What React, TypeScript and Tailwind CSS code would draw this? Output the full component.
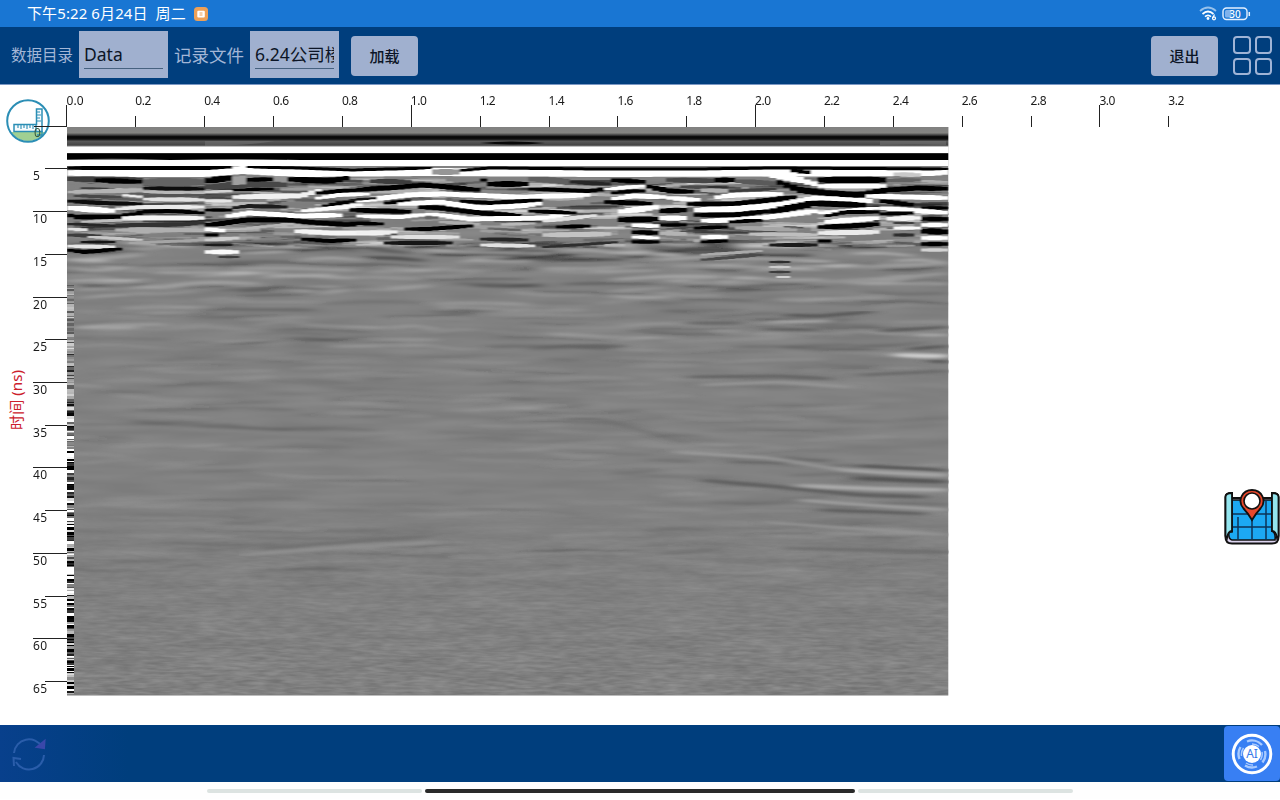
import type { ReactNode } from "react";

const FONT = "font-['Noto_Sans','Noto_Sans_CJK_SC',sans-serif]";

const LEFT = 67;
const RIGHT = 948.5;
const TRACE = (RIGHT - LEFT) / 128;

/** Horizon: grey level (0-255), thickness, then x,y points in page pixels. */
type Horizon = [number, number, ...number[]];

const HORIZONS: Horizon[] = [
  // first arrivals
  [255, 8, 67, 173, 205, 173, 240, 170, 300, 173, 430, 172, 600, 173, 948, 172],
  [0, 4, 67, 168, 205, 168, 231, 167],
  [0, 3, 245, 167, 300, 168, 350, 170, 432, 168],
  [0, 3, 455, 171, 490, 168, 600, 169, 700, 169, 770, 168, 948, 169],
  [150, 7, 432, 172, 458, 172],
  // 67 - 143
  [60, 6, 67, 179, 143, 180],
  [0, 5, 94, 180, 143, 182],
  [130, 4, 67, 186, 143, 186],
  [60, 3, 80, 188, 120, 190],
  [180, 4, 67, 192, 143, 190],
  [235, 3, 122, 195, 143, 197],
  [70, 3, 75, 196, 120, 197],
  [10, 4, 67, 201, 100, 203, 143, 204],
  [255, 6, 67, 208, 118, 211],
  [0, 5, 67, 214, 74, 217, 118, 217, 143, 213],
  [190, 3, 80, 222, 143, 219],
  [40, 3, 67, 224, 120, 226],
  [225, 4, 67, 229, 90, 230],
  [60, 4, 67, 235, 100, 236],
  [200, 3, 90, 237, 143, 240],
  [20, 3, 83, 242, 112, 242],
  [230, 4, 67, 246, 112, 247],
  [0, 4, 67, 250, 85, 252, 120, 249],
  // 143 - 205
  [100, 8, 143, 182, 205, 182],
  [15, 4, 143, 188, 205, 189],
  [185, 3, 143, 192, 205, 193],
  [85, 3, 143, 196, 205, 195],
  [225, 4, 143, 199, 205, 200],
  [75, 2, 143, 204, 205, 203],
  [235, 4, 118, 209, 143, 207, 205, 207],
  [0, 4, 135, 212, 170, 211, 205, 213],
  [245, 5, 125, 218, 205, 218],
  [50, 4, 115, 225, 170, 225, 205, 223],
  [175, 4, 118, 230, 205, 230],
  [165, 3, 130, 243, 205, 240],
  // 205 - 355
  [0, 7, 205, 181, 231, 178],
  [70, 6, 205, 187, 250, 184, 290, 185],
  [160, 12, 232, 181, 246, 180],
  [0, 5, 246, 180, 273, 179],
  [150, 7, 273, 178, 287, 180],
  [0, 6, 284, 179, 330, 181, 352, 177],
  [0, 3, 235, 190, 275, 189],
  [210, 3, 205, 192, 230, 191],
  [80, 3, 205, 196, 232, 195],
  [240, 5, 232, 197, 300, 196, 325, 189],
  [230, 4, 205, 201, 230, 201],
  [30, 4, 232, 208, 250, 206, 285, 207],
  [0, 4, 205, 210, 230, 210],
  [255, 5, 222, 217, 250, 213, 300, 216, 345, 215],
  [0, 5, 205, 225, 218, 224, 245, 220, 285, 220, 320, 223, 355, 225],
  [180, 3, 240, 229, 290, 224, 310, 228],
  [255, 5, 205, 229, 228, 231],
  [0, 4, 205, 235, 216, 235],
  [205, 4, 205, 240, 240, 238],
  [30, 3, 205, 245, 232, 245],
  [250, 5, 205, 252, 238, 252],
  [60, 3, 218, 257, 238, 257],
  [245, 5, 295, 231, 330, 233, 390, 233],
  [0, 4, 300, 239, 330, 241, 355, 240],
  [0, 4, 316, 193, 340, 191, 365, 190],
  [255, 4, 312, 199, 340, 195, 370, 194],
  [0, 4, 324, 206, 340, 203, 355, 201],
  [250, 4, 300, 211, 345, 207, 365, 204],
  // 350 - 610
  [60, 5, 367, 181, 412, 182],
  [0, 5, 355, 190, 400, 187, 424, 185, 480, 190],
  [0, 4, 480, 180, 488, 180],
  [0, 6, 488, 184, 525, 184],
  [95, 6, 528, 179, 570, 181],
  [40, 4, 568, 182, 612, 184],
  [0, 4, 525, 189, 590, 191, 620, 187],
  [255, 5, 355, 201, 410, 195, 440, 194, 520, 197, 590, 195],
  [20, 3, 352, 200, 376, 198],
  [0, 4, 384, 203, 410, 201],
  [0, 4, 458, 201, 490, 203, 540, 200],
  [255, 5, 400, 204, 440, 202, 480, 208, 520, 206, 545, 203],
  [0, 5, 350, 210, 385, 211, 412, 212],
  [0, 5, 418, 207, 440, 208, 480, 213, 520, 216],
  [255, 4, 355, 216, 400, 217, 432, 214],
  [255, 5, 432, 214, 470, 219, 545, 218, 570, 214],
  [0, 4, 528, 211, 575, 213],
  [225, 4, 545, 221, 600, 215],
  [0, 4, 350, 223, 385, 224],
  [0, 4, 405, 229, 430, 229, 470, 226],
  [0, 4, 553, 227, 590, 226],
  [240, 4, 355, 233, 395, 232],
  [225, 4, 393, 237, 458, 237],
  [20, 4, 383, 243, 450, 243],
  [40, 4, 480, 239, 525, 240],
  [225, 4, 480, 245, 535, 246],
  [195, 5, 545, 235, 612, 234],
  [45, 3, 545, 247, 590, 244, 618, 242],
  // 605 - 720
  [0, 5, 612, 180, 645, 182],
  [255, 4, 605, 189, 645, 186],
  [0, 4, 612, 193, 632, 191, 645, 191],
  [255, 5, 612, 199, 632, 196, 665, 197],
  [0, 5, 605, 202, 632, 203, 655, 204],
  [0, 5, 645, 186, 670, 191, 695, 192],
  [255, 6, 618, 212, 632, 210, 660, 207],
  [0, 6, 618, 220, 658, 219],
  [0, 6, 660, 211, 688, 210],
  [255, 5, 632, 225, 658, 226],
  [0, 5, 632, 232, 658, 233],
  [255, 4, 632, 237, 658, 238],
  [0, 4, 632, 242, 658, 242],
  [255, 6, 660, 218, 688, 218],
  [0, 4, 660, 225, 688, 225],
  [180, 5, 660, 233, 690, 234],
  // 680 - 820
  [70, 5, 665, 180, 720, 181],
  [0, 6, 716, 180, 735, 180],
  [90, 5, 735, 181, 780, 184],
  [175, 5, 700, 190, 728, 191],
  [60, 3, 730, 191, 775, 189],
  [255, 5, 668, 198, 700, 200],
  [255, 5, 712, 198, 735, 195, 780, 194],
  [0, 5, 686, 204, 735, 204, 770, 200, 795, 197],
  [255, 6, 693, 210, 735, 209, 780, 205, 818, 198, 870, 201],
  [0, 5, 693, 215, 735, 215, 770, 211],
  [0, 7, 772, 211, 795, 207, 818, 203],
  [255, 5, 700, 221, 735, 220, 770, 217, 818, 211],
  [0, 4, 697, 228, 725, 227],
  [0, 4, 730, 222, 765, 220],
  [255, 5, 698, 237, 725, 237],
  [0, 4, 700, 242, 725, 241],
  [165, 4, 738, 228, 800, 230],
  [190, 4, 750, 234, 818, 235],
  [30, 4, 770, 245, 818, 245],
  [75, 3, 700, 260, 760, 255],
  [170, 3, 700, 255, 760, 251],
  [45, 3, 770, 262, 792, 262],
  [205, 3, 770, 267, 792, 267],
  [60, 3, 770, 272, 790, 272],
  [210, 3, 776, 277, 788, 277],
  [0, 6, 778, 182, 800, 190, 825, 193, 860, 195, 885, 191],
  [255, 6, 760, 173, 800, 180, 818, 185],
  [0, 5, 790, 170, 812, 173],
  // 818 - 948
  [255, 6, 818, 174, 880, 174],
  [0, 7, 818, 180, 884, 180],
  [255, 5, 818, 186, 884, 186],
  [100, 4, 885, 180, 920, 180],
  [200, 5, 890, 174, 920, 175],
  [0, 5, 870, 191, 920, 188, 948, 189],
  [255, 5, 818, 198, 864, 201],
  [0, 6, 805, 203, 866, 205],
  [255, 5, 868, 196, 910, 197, 948, 198],
  [0, 5, 880, 201, 915, 205],
  [0, 4, 920, 208, 948, 208],
  [255, 5, 880, 208, 920, 211, 948, 213],
  [0, 4, 880, 214, 912, 213],
  [255, 4, 820, 213, 880, 208],
  [0, 4, 822, 217, 845, 212, 880, 212],
  [255, 5, 822, 222, 880, 218],
  [0, 5, 818, 227, 850, 226, 880, 224],
  [235, 5, 818, 233, 880, 232],
  [0, 4, 818, 241, 834, 241],
  [245, 5, 885, 219, 918, 218],
  [60, 3, 893, 223, 915, 223],
  [250, 4, 893, 228, 920, 228],
  [0, 5, 921, 219, 948, 219],
  [255, 5, 921, 225, 948, 225],
  [0, 7, 921, 231, 948, 232],
  [255, 5, 921, 238, 948, 238],
  [0, 5, 921, 244, 948, 244],
  [210, 4, 921, 250, 948, 250],
  [45, 4, 893, 235, 915, 235],
  // deep reflections
  [85, 3, 780, 315, 820, 316, 870, 312],
  [165, 3, 770, 322, 830, 321],
  [105, 4, 690, 323, 740, 323],
  [150, 2, 710, 331, 740, 331],
  [95, 3, 765, 329, 820, 330],
  [90, 3, 880, 331, 948, 327],
  [170, 3, 915, 335, 948, 335],
  [85, 3, 910, 349, 948, 346],
  [205, 4, 895, 355, 925, 356, 948, 356],
  [75, 3, 925, 361, 948, 362],
  [100, 3, 690, 377, 780, 376, 830, 379],
  [150, 3, 700, 385, 780, 382, 850, 387],
  [105, 3, 860, 375, 948, 371],
  [100, 3, 580, 347, 625, 346],
  [105, 2, 560, 419, 600, 419, 690, 444],
  [155, 3, 675, 452, 770, 458, 830, 468, 880, 473, 948, 476],
  [165, 4, 840, 470, 890, 473, 948, 475],
  [85, 4, 850, 478, 900, 480, 948, 482],
  [170, 4, 800, 486, 880, 489, 948, 490],
  [95, 4, 700, 480, 780, 487, 860, 495, 930, 497],
  [160, 3, 800, 500, 850, 504, 948, 510],
  [92, 3, 820, 510, 880, 512, 930, 514],
  [85, 3, 860, 466, 925, 469, 948, 471],
  [95, 2, 730, 462, 790, 463],
  [148, 3, 760, 522, 948, 535],
  [110, 3, 780, 548, 948, 552],
  [145, 3, 240, 555, 320, 549, 440, 542],
  [112, 3, 260, 549, 330, 543, 430, 536],
];

function heightAt(points: number[], x: number) {
  for (let i = 0; i + 3 < points.length; i += 2) {
    if (x <= points[i + 2]) {
      const t = Math.max(0, (x - points[i]) / (points[i + 2] - points[i]));
      return points[i + 1] + (points[i + 3] - points[i + 1]) * t;
    }
  }
  return points[points.length - 1];
}

/** Builds one horizon trace by trace, the way the recorder samples it. */
function horizonPath(thickness: number, points: number[]) {
  const first = Math.round((points[0] - LEFT) / TRACE);
  const last = Math.max(first + 1, Math.round((points[points.length - 2] - LEFT) / TRACE));
  let d = "";
  for (let c = first; c < last; c++) {
    const x = LEFT + c * TRACE;
    const y = heightAt(points, x + TRACE / 2);
    const edge = Math.min(c - first, last - 1 - c);
    const h = thickness * (edge === 0 ? 0.7 : edge === 1 ? 0.88 : 1);
    d += `M${x.toFixed(1)} ${(y - h / 2).toFixed(1)}h${(TRACE + 0.1).toFixed(2)}v${h.toFixed(1)}h-${(TRACE + 0.1).toFixed(2)}z`;
  }
  return d;
}

function makeRandom(seed: number) {
  let s = seed;
  return () => {
    s = (s * 1664525 + 1013904223) % 4294967296;
    return s / 4294967296;
  };
}

type Streak = { grey: number; d: string; o: number };

function scatter(): Streak[] {
  const rnd = makeRandom(73);
  const out: Streak[] = [];
  for (let i = 0; i < 520; i++) {
    const depth = Math.pow(rnd(), 1.6);
    const y = 243 + depth * 330;
    const x = LEFT - 20 + rnd() * 860;
    const len = 35 + rnd() * 90;
    const x0 = Math.max(LEFT, x);
    const x1 = Math.min(RIGHT, x + len);
    if (x1 - x0 < 12) continue;
    const slope = (rnd() - 0.5) * 9;
    const bow = (rnd() - 0.5) * 5;
    const strength = y < 262 ? 0.45 : y < 300 ? 0.28 : y < 350 ? 0.17 : 0.1;
    out.push({
      grey: i % 2 ? 15 : 245,
      o: strength * (0.4 + rnd() * 0.6),
      d: horizonPath(2 + rnd() * 1.8, [x0, y, (x0 + x1) / 2, y + slope / 2 + bow, x1, y + slope]),
    });
  }
  return out;
}

/** Short bright and dark streaks in the strongly reflecting upper layer. */
function upperScatter(): Streak[] {
  const rnd = makeRandom(412);
  const out: Streak[] = [];
  for (let i = 0; i < 420; i++) {
    const y = 179 + rnd() * 68;
    const x0 = LEFT + rnd() * 860;
    const x1 = Math.min(RIGHT, x0 + 18 + rnd() * 50);
    if (x1 - x0 < 12) continue;
    out.push({
      grey: i % 2 ? 20 : 235,
      o: (y < 232 ? 0.55 : 0.35) * (0.4 + rnd() * 0.6),
      d: horizonPath(2.2 + rnd() * 1.6, [x0, y, x1, y + (rnd() - 0.5) * 6]),
    });
  }
  return out;
}

function edgeBars() {
  const rnd = makeRandom(19);
  const bars: { y: number; h: number; grey: number }[] = [];
  let y = 285;
  while (y < 694) {
    const h = 1 + Math.floor(rnd() * 2.4);
    const amp = Math.min(1, 0.15 + (y - 268) / 330);
    bars.push({
      y,
      h: Math.min(h, 695 - y),
      grey: Math.round(Math.max(0, Math.min(255, 134 + amp * (rnd() - 0.48) * 460))),
    });
    y += h;
  }
  return bars;
}

const SCATTER = scatter();
const UPPER = upperScatter();
const BARS = edgeBars();
const grey = (g: number) => `rgb(${g},${g},${g})`;

function Radargram() {
  return (
    <g>
      <defs>
        <linearGradient id="shallow" x1="0" x2="0" y1="0" y2="1">
          <stop offset="0" stopColor="#808080" />
          <stop offset="0.3" stopColor="#858582" />
          <stop offset="0.42" stopColor="#3b3b3b" />
          <stop offset="0.5" stopColor="#050505" />
          <stop offset="0.62" stopColor="#111" />
          <stop offset="0.73" stopColor="#5a5a5a" />
          <stop offset="0.9" stopColor="#474747" />
          <stop offset="1" stopColor="#777" />
        </linearGradient>
        <filter id="soften" x="0" y="0" width="1" height="1">
          <feGaussianBlur stdDeviation="1.2 0.6" />
        </filter>
        <filter id="soften-deep" x="0" y="0" width="1" height="1">
          <feGaussianBlur stdDeviation="7 0.9" />
        </filter>
        <filter id="waves" x="0" y="0" width="1" height="1" colorInterpolationFilters="sRGB">
          <feTurbulence type="fractalNoise" baseFrequency="0.011 0.1" numOctaves={2} seed={8} />
          <feColorMatrix values="1 0 0 0 0  1 0 0 0 0  1 0 0 0 0  0 0 0 0 1" />
        </filter>
        <filter id="grain" x="0" y="0" width="1" height="1" colorInterpolationFilters="sRGB">
          <feTurbulence type="fractalNoise" baseFrequency="0.06 0.4" numOctaves={2} seed={3} />
          <feColorMatrix values="1 0 0 0 0  1 0 0 0 0  1 0 0 0 0  0 0 0 0 1" />
        </filter>
        <linearGradient id="fade-down" x1="0" x2="0" y1="0" y2="1">
          <stop offset="0" stopColor="#000" />
          <stop offset="1" stopColor="#fff" />
        </linearGradient>
        <mask id="deep">
          <rect x={LEFT} y={500} width={RIGHT - LEFT} height={195} fill="url(#fade-down)" />
        </mask>
        <clipPath id="section">
          <rect x={LEFT} y={127} width={RIGHT - LEFT} height={568.5} />
        </clipPath>
      </defs>
      <g clipPath="url(#section)">
        <rect x={LEFT} y={127} width={RIGHT - LEFT} height={569} fill="#828282" />
        <rect x={LEFT} y={178} width={RIGHT - LEFT} height={518} filter="url(#waves)" opacity={0.08} />
        <g mask="url(#deep)">
          <rect x={LEFT} y={500} width={RIGHT - LEFT} height={195} filter="url(#grain)" opacity={0.15} />
        </g>
        <g filter="url(#soften-deep)">
          {SCATTER.map((s, i) => (
            <path key={i} d={s.d} fill={grey(s.grey)} opacity={s.o} />
          ))}
        </g>
        <g filter="url(#soften-deep)">
          {HORIZONS.filter((h) => h[3] > 280).map(([g, w, ...pts], i) => (
            <path key={i} d={horizonPath(w, pts)} fill={grey(g)} />
          ))}
        </g>
        <g filter="url(#soften)">
          {UPPER.map((s, i) => (
            <path key={i} d={s.d} fill={grey(s.grey)} opacity={s.o} />
          ))}
        </g>
        <g filter="url(#soften)">
          {HORIZONS.filter((h) => h[3] <= 280).map(([g, w, ...pts], i) => (
            <path key={i} d={horizonPath(w, pts)} fill={grey(g)} />
          ))}
        </g>
        <rect x={LEFT} y={127} width={RIGHT - LEFT} height={19.5} fill="url(#shallow)" />
        <path d="M480 143q32-3 65 0q-32 3-65 0" fill="#080808" />
        <path d="M205 141h70q-30 5-70 5zM880 141h66v4q-30-1-66 0z" fill="#777" opacity={0.5} />
        <rect x={LEFT} y={146.5} width={RIGHT - LEFT} height={6.7} fill="#fff" />
        <path d={`M${LEFT} 153.2H${RIGHT}V160H300q-60-2-130 0q-50-2-103-.5z`} fill="#000" />
        <rect x={LEFT} y={160} width={RIGHT - LEFT} height={6} fill="#fff" />
        {BARS.map((b) => (
          <rect key={b.y} x={LEFT} y={b.y} width={7} height={b.h} fill={grey(b.grey)} />
        ))}
      </g>
    </g>
  );
}

function Axes() {
  const items: ReactNode[] = [];
  for (let i = 0; i <= 16; i++) {
    const x = 67 + i * 68.86;
    items.push(
      <g key={`x${i}`}>
        <path d={`M${Math.floor(x) + (i === 0 ? -0.5 : 0.5)} ${i % 5 === 0 ? 105 : 116}V127`} stroke="#222" />
        <text x={x + (i === 0 ? -0.5 : -0.5)} y={104.5} textLength={i === 0 ? 17 : 16}>
          {(i * 0.2).toFixed(1)}
        </text>
      </g>,
    );
  }
  for (let i = 0; i <= 13; i++) {
    const y = Math.floor(126.2 + i * 42.72) + 0.5;
    items.push(
      <g key={`y${i}`}>
        <path d={`M${i % 2 ? 45 : 33} ${y}H67`} stroke="#222" />
        {i > 0 && (
          <text x={33} y={y + 11} textLength={i < 2 ? 7 : 14}>
            {i * 5}
          </text>
        )}
      </g>,
    );
  }
  return (
    <g fontSize={12} fill="#1b1b1b">
      {items}
    </g>
  );
}

function RulerIcon() {
  return (
    <svg viewBox="0 0 44 44" className="size-11">
      <clipPath id="disc">
        <circle cx="22" cy="22" r="20" />
      </clipPath>
      <path d="M0 33H44V44H0z" fill="#a0d092" clipPath="url(#disc)" />
      <circle cx="22" cy="22" r="20.800" fill="none" stroke="#2b8eb5" strokeWidth="2" />
      <path d="M8 25.500H30.500V10H36V32.500H8z" fill="#f7fbfd" stroke="#2b8eb5" strokeWidth="1.500" />
      <path
        d="M12 26v3M15 26v4M18 26v3M21 26v4M24 26v3M27 26v4M31 13h3M31 16h4M31 19h3M31 22h4"
        stroke="#2b8eb5"
        strokeWidth="1.100"
      />
      <path d="M30 25.500v7M36 32v4H31" fill="none" stroke="#2b8eb5" strokeWidth="1.300" />
      <path d="M28 27.500H44" stroke="#222" />
    </svg>
  );
}

function MapIcon() {
  return (
    <svg viewBox="0 0 56 58" className="h-[58px] w-14">
      <path
        d="M1.500 49V9q0-4 6.500-4v5h40V5q6.500 0 6.500 4v40q0 6.500-6.500 6.500H8q-6.500 0-6.500-6.500z"
        fill="#dcd4ef"
        stroke="#111"
        strokeWidth="2"
      />
      <path d="M8 12H48V43q4 2 3 9H8q-4-1-3-8h3z" fill="#1ca9f3" stroke="#111" strokeWidth="1.600" />
      <path d="M8 26H48M8 39H48M14 29v23M28 32v20M42 12v40" stroke="#0c3357" strokeWidth="1.500" />
      <path
        d="M1.500 48V9q0-4 6.500-4v38q-4 0-5 7zM54.500 48V9q0-4-6.500-4v38q4 0 5 7z"
        fill="#94e5ee"
        stroke="#111"
        strokeWidth="1.800"
      />
      <path
        d="M28 32Q24 25 19.500 20.500C13 13 18 2 28 2s15 11 8.500 18.500Q32 25 28 32z"
        fill="#e8472b"
        stroke="#111"
        strokeWidth="1.800"
      />
      <circle cx="28" cy="13" r="8" fill="#fff" stroke="#111" strokeWidth="1.600" />
    </svg>
  );
}

function AiIcon() {
  return (
    <svg viewBox="0 0 42 42" className="size-[42px]">
      <circle cx="21" cy="21" r="18.800" fill="none" stroke="#fff" strokeWidth="3" />
      <g fill="none" stroke="#a9cbff" strokeWidth="2.400">
        <path d="M16 8.500A13.500 13.500 0 0 1 31 12M34 18A13.500 13.500 0 0 1 31.500 29.500M26 33.500A13.500 13.500 0 0 1 14 32.500M8.500 26A13.500 13.500 0 0 1 9.500 14" />
        <path d="M21 11A10.500 10.500 0 0 1 28 13.500M31 19A11 11 0 0 1 29.500 27M22 32A11 11 0 0 1 15 30M10.500 23A11 11 0 0 1 12.500 15" strokeWidth="1.500" />
      </g>
      <circle cx="21" cy="21" r="9" fill="#fff" />
      <text x="21" y="25.300" textAnchor="middle" fontSize="12" fill="#387be9">
        AI
      </text>
    </svg>
  );
}

function PathField({ value }: { value: string }) {
  return (
    <div className="flex h-[47px] w-[89px] flex-col bg-[#a0b0cf] px-[5px] pt-[10px]">
      <div className="h-[28px] overflow-hidden border-b border-[#46617f] text-[17.5px] leading-[26px] whitespace-nowrap text-[#0c1526]">
        {value}
      </div>
    </div>
  );
}

function ToolButton({ children }: { children: ReactNode }) {
  return (
    <button className="flex h-10 w-[67px] items-center justify-center rounded-sm bg-[#a0b0cf] pt-[2px] text-[15px] font-medium text-[#0c1526]">
      {children}
    </button>
  );
}

export default function App() {
  return (
    <div className={`relative flex h-[800px] w-[1280px] flex-col overflow-hidden bg-white ${FONT}`}>
      <header className="flex h-[27px] shrink-0 items-center bg-[#1976d3] pr-[29px] pl-[27px] text-white">
        <span className="text-[15px] tracking-[0.1px] whitespace-nowrap">下午5:22 6月24日&nbsp; 周二</span>
        <svg viewBox="0 0 14 14" className="ml-2 size-[14px]">
          <rect width="14" height="14" rx="3.500" fill="#eda057" />
          <rect x="3.300" y="3.700" width="7.500" height="6.800" rx="1" fill="#fff" />
          <path d="M5.500 6h3M5.500 8h3" stroke="#eda057" />
        </svg>
        <svg viewBox="0 0 19 15" className="ml-auto h-[15px] w-[19px]">
          <g fill="none" stroke="#fff" strokeWidth="1.700">
            <path d="M1 5Q9 -2 17 5" opacity="0.550" />
            <path d="M3.500 8Q9 3 14.500 8" />
            <path d="M6 10.700Q9 8 12 10.700" />
          </g>
          <circle cx="9" cy="12.500" r="1.400" fill="#fff" />
          <path d="M15.500 8.500L13.600 12" stroke="#fff" strokeWidth="1.300" />
          <circle cx="15" cy="12.300" r="1.500" fill="none" stroke="#fff" strokeWidth="1.300" />
        </svg>
        <svg viewBox="0 0 29 14" className="ml-1 h-[14px] w-[29px]">
          <rect x="1" y="1" width="24" height="11.500" rx="3.500" fill="none" stroke="#e4f0ff" strokeWidth="1.400" />
          <rect x="3" y="3" width="6.500" height="7.500" rx="1.500" fill="#7fb2ec" />
          <path d="M27.300 5v4" stroke="#e4f0ff" strokeWidth="1.500" />
          <text x="13" y="10.600" textAnchor="middle" fontSize="10" fontWeight="500" fill="#fff">
            30
          </text>
        </svg>
      </header>

      <div className="flex h-[58px] shrink-0 items-center border-b border-[#7b98c4] bg-[#003e7d] pl-[11px] text-[#a3b6d6]">
        <span className="w-[68px] text-[15.5px] whitespace-nowrap">数据目录</span>
        <div className="mb-[3px]">
          <PathField value="Data" />
        </div>
        <span className="w-[76px] pl-[6px] text-[17.5px] whitespace-nowrap">记录文件</span>
        <div className="mr-3 mb-[3px] ml-[6px]">
          <PathField value="6.24公司楼" />
        </div>
        <ToolButton>加载</ToolButton>
        <div className="mr-[15px] ml-auto">
          <ToolButton>退出</ToolButton>
        </div>
        <div className="mr-2 grid grid-cols-2 gap-1">
          <i className="size-[17.5px] rounded-[4px] border-2 border-[#a0b4d6]" />
          <i className="size-[17.5px] rounded-[4px] border-2 border-[#a0b4d6]" />
          <i className="size-[17.5px] rounded-[4px] border-2 border-[#a0b4d6]" />
          <i className="size-[17.5px] rounded-[4px] border-2 border-[#a0b4d6]" />
        </div>
      </div>

      <main className="h-[640px] shrink-0">
        <svg viewBox="0 85 1280 640" className="block h-[640px] w-[1280px]">
          <Radargram />
          <Axes />
          <text
            transform="translate(22 430) rotate(-90)"
            fontSize={15}
            fill="#cc202b"
            textLength={60}
            lengthAdjust="spacingAndGlyphs"
          >
            时间 (ns)
          </text>
        </svg>
      </main>

      <footer className="flex h-[57px] shrink-0 items-center justify-between bg-gradient-to-r from-[#08408c] via-[#003e7d] via-10% to-[#003e7d] pl-[10px]">
        <svg viewBox="0 0 38 38" className="size-[38px]" fill="none" stroke="#2a5daa" strokeWidth="2">
          <path d="M4 18A15 15 0 0 1 32 12M34 20A15 15 0 0 1 6 27" />
          <path d="M27 12L34 13L34.500 6z" fill="#3a48aa" stroke="#3a48aa" />
          <path d="M4 31L3.500 23L11 24" />
        </svg>
        <div className="flex h-[55px] w-14 items-center justify-center rounded-[4px] bg-[#387ff3]">
          <AiIcon />
        </div>
      </footer>

      <div className="flex h-[17px] items-center justify-center gap-[3px] bg-[#fefefe]">
        <div className="h-1 w-[215px] rounded-full bg-[#dce3e1]" />
        <div className="h-1 w-[430px] rounded-full bg-[#292929]" />
        <div className="h-1 w-[215px] rounded-full bg-[#dce3e1]" />
      </div>

      <div className="absolute top-[99px] left-[6px]">
        <RulerIcon />
      </div>
      <div className="absolute top-[488px] left-[1224px]">
        <MapIcon />
      </div>
      <span className="absolute top-[125px] left-[34px] text-[12px] leading-4 text-[#32583c]">0</span>
    </div>
  );
}
